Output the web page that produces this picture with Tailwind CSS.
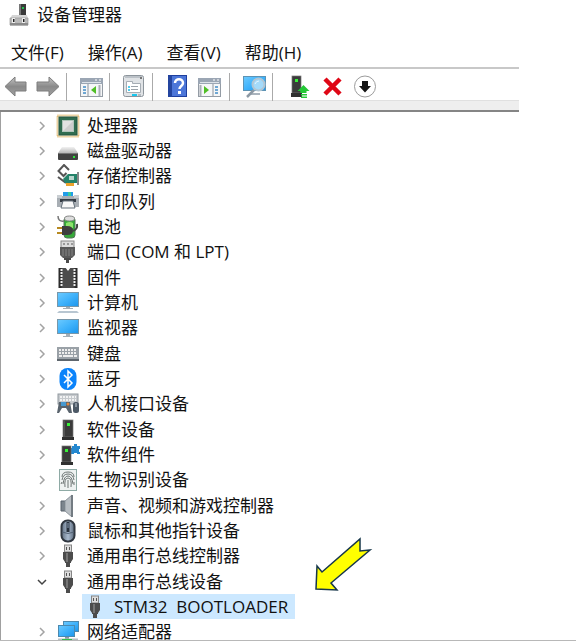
<!DOCTYPE html>
<html lang="zh-CN">
<head>
    <meta charset="UTF-8">
    <meta name="viewport" content="width=device-width, initial-scale=1.0">
    <title>设备管理器</title>
    <script src="https://cdn.jsdelivr.net/npm/@tailwindcss/browser@4"></script>
</head>
<body class="bg-white text-[#111] font-['Open_Sans','Noto_Sans_CJK_SC',sans-serif] text-[17px]">
    <!-- Shared icon shapes -->
    <svg class="absolute size-0">
        <defs>
            <linearGradient id="screen" x1="0" y1="0" x2="1" y2="1">
                <stop offset="0" stop-color="#6ccaff"/><stop offset=".5" stop-color="#3fb2fb"/><stop offset="1" stop-color="#1b95ec"/>
            </linearGradient>
            <linearGradient id="metal" x1="0" y1="0" x2="0" y2="1">
                <stop offset="0" stop-color="#c4c4c4"/><stop offset=".5" stop-color="#8a8a8a"/><stop offset="1" stop-color="#a0a0a0"/>
            </linearGradient>
            <linearGradient id="drive" x1="0" y1="0" x2="0" y2="1">
                <stop offset="0" stop-color="#f2f2f2"/><stop offset="1" stop-color="#b8b8b8"/>
            </linearGradient>
            <linearGradient id="mouseBody" x1="0" y1="0" x2="1" y2="0">
                <stop offset="0" stop-color="#5f6e80"/><stop offset=".5" stop-color="#a9bace"/><stop offset="1" stop-color="#5b6a7c"/>
            </linearGradient>
            <symbol id="chevron" viewBox="0 0 10 10"><path d="M3 1l4 4-4 4" fill="none" stroke="#a3a3a3" stroke-width="1.5"/></symbol>
            <symbol id="usb" viewBox="0 0 24 24">
                <rect x="8.500" y="1" width="7" height="7" fill="#ddd" stroke="#858585"/>
                <path d="M10 3h1v3h-1zM13 3h1v3h-1z" fill="#555"/>
                <path d="M7 8h10v7l-2 3v1h-1v4h-4v-4H9v-1l-2-3z" fill="#4c4c4c"/>
                <path d="M10 9h2v9h-2z" fill="#757575"/>
            </symbol>
            <symbol id="tower" viewBox="0 0 24 24">
                <rect x="7" y="2" width="10" height="17" fill="#3b3b3b" stroke="#777" stroke-width=".7"/>
                <path d="M6 19h12v3H6z" fill="#303030"/><path d="M7 3h2v16H7z" fill="#555"/>
                <rect x="11" y="5" width="3" height="3" fill="#38f038"/>
            </symbol>
        </defs>
    </svg>

    <div class="relative h-screen overflow-hidden border-b border-[#b8b8b8]">
        <!-- Title bar -->
        <header class="flex h-[30px] items-center gap-[5px] pl-2">
            <svg class="size-6" viewBox="0 0 24 24">
                <rect x="11" y="1" width="7" height="12" fill="#3a3a3a"/><path d="M11 1h2v12h-2z" fill="#777"/>
                <rect x="14" y="4" width="2" height="2" fill="#22c04c"/>
                <path d="M4 12h15l1 4H2z" fill="#d6d6d6"/><path d="M2 15h18v7H2z" fill="#b9b9b9" stroke="#999" stroke-width=".7"/>
                <path d="M2 20h18v2.500H2z" fill="#8c8c8c"/><path d="M4 15h3v5H4zM14 15h3v5h-3z" fill="#eee"/><path d="M5 16h1.500v3H5zM15 16h1.500v3H15z" fill="#222"/>
            </svg>
            <h1>设备管理器</h1>
        </header>

        <!-- Menu bar -->
        <nav class="mr-[57px] flex h-[39px] items-center gap-6 border-b-2 border-[#c8c8c8] pt-2 pl-[11px]">
            <button>文件(F)</button>
            <button>操作(A)</button>
            <button>查看(V)</button>
            <button>帮助(H)</button>
        </nav>

        <!-- Toolbar -->
        <div class="mr-[57px] flex h-[31px] items-center pt-1 pl-1">
            <button aria-label="后退"><svg class="size-6" viewBox="0 0 24 24"><path d="M1 11.500L11 2v5h11v9H11v5z" fill="url(#metal)" stroke="#7d7d7d"/></svg></button>
            <button class="ml-2" aria-label="前进"><svg class="size-6" viewBox="0 0 24 24"><path d="M23 11.500L13 2v5H1v9h12v5z" fill="url(#metal)" stroke="#7d7d7d"/></svg></button>
            <span class="ml-1.5 h-7 w-px bg-[#aaa]"></span>
            <button class="ml-3" aria-label="显示控制台树">
                <svg class="size-6" viewBox="0 0 24 24">
                    <rect x="1.500" y="3.500" width="22" height="18" fill="#f5f6f7" stroke="#949ca5"/><path d="M1 3h23v6H1z" fill="#9ba6b4"/>
                    <path d="M16 5h2M20 5h2" stroke="#fff"/><path d="M3 7.500h19" stroke="#dce2e8"/><path d="M9 9v12" stroke="#8b949e"/>
                    <path d="M4 12h3M4 15h3M4 18h3" stroke="#438dc7" stroke-width="1.500"/><path d="M17 11v8l-5-4z" fill="#4fbe26"/><path d="M20.500 10v11" stroke="#a9afb6" stroke-width="2"/>
                </svg>
            </button>
            <span class="ml-1.5 h-7 w-px bg-[#aaa]"></span>
            <button class="ml-3" aria-label="属性">
                <svg class="size-6" viewBox="0 0 24 24">
                    <rect x="1.500" y=".5" width="20" height="21" rx="2" fill="#e0e3e6" stroke="#8d959c"/><path d="M3 2h17" stroke="#bcc2c8" stroke-width="2"/>
                    <path d="M18 2l2 2M20 2l-2 2" stroke="#777"/><path d="M4.500 6.500h6v2h8v9h-14z" fill="#fff" stroke="#a6adb4"/>
                    <path d="M6 12h2M6 15h2" stroke="#15bde9" stroke-width="1.500"/><path d="M9 11.500h7M9 14.500h7" stroke="#9ca3aa"/>
                    <path d="M10 19h5v2h-5z" fill="#19c6ee"/><path d="M16 19h3v2h-3z" fill="#b4bac0"/>
                </svg>
            </button>
            <span class="ml-1.5 h-7 w-px bg-[#aaa]"></span>
            <button class="ml-3" aria-label="帮助">
                <svg class="size-6" viewBox="0 0 24 24">
                    <rect x="3.500" y=".5" width="18" height="21" fill="#4c76d8" stroke="#1e3f9e"/><path d="M3 1h4v21H3z" fill="#24459f"/>
                    <path d="M10 8c0-5 8-5 8 0 0 3-3.500 3-3.500 6" fill="none" stroke="#fff" stroke-width="2.500"/><path d="M13 16h3v3h-3z" fill="#fff"/>
                </svg>
            </button>
            <button class="ml-2" aria-label="操作窗格">
                <svg class="size-6" viewBox="0 0 24 24">
                    <rect x="1.500" y="3.500" width="22" height="18" fill="#f5f6f7" stroke="#949ca5"/><path d="M1 3h23v6H1z" fill="#9ba6b4"/>
                    <path d="M16 5h2M20 5h2" stroke="#fff"/><path d="M3 7.500h19" stroke="#dce2e8"/><path d="M16 9v12" stroke="#8b949e"/>
                    <path d="M18 12h3M18 15h3M18 18h3" stroke="#438dc7" stroke-width="1.500"/><path d="M7 11v8l5-4z" fill="#4fbe26"/><path d="M3.500 10v11" stroke="#a9afb6" stroke-width="2"/>
                </svg>
            </button>
            <span class="ml-2 h-7 w-px bg-[#aaa]"></span>
            <button class="ml-3" aria-label="扫描检测硬件改动">
                <svg class="size-6" viewBox="0 0 24 24">
                    <rect x="1.500" y="1.500" width="22" height="14" fill="url(#screen)" stroke="#5d93b4"/><path d="M8 18h10v2H8z" fill="#aab4bd"/>
                    <path d="M12 15l-7 7" stroke="#8d99a4" stroke-width="2.500"/><circle cx="16.500" cy="9.500" r="6" fill="#a4dafa" stroke="#b1c6d4" stroke-width="2"/>
                    <path d="M13 9q1-3 4-3" fill="none" stroke="#e6f6ff"/>
                </svg>
            </button>
            <span class="ml-1.5 h-7 w-px bg-[#aaa]"></span>
            <button class="ml-4" aria-label="更新驱动程序">
                <svg class="size-6" viewBox="0 0 24 24">
                    <rect x="3" y="1" width="9" height="17" fill="#3b3b3b" stroke="#777" stroke-width=".7"/><path d="M2 18h11v4H2z" fill="#303030"/>
                    <rect x="6" y="4" width="3" height="3" fill="#38f038"/><path d="M14.500 10l6 6h-3v2h-6v-2h-3z" fill="#24c736"/><path d="M12 19h6v1.500h-6zM12 21.500h6V23h-6z" fill="#24c736"/>
                </svg>
            </button>
            <button class="ml-2" aria-label="卸载设备"><svg class="size-6" viewBox="0 0 24 24"><path d="M4 4l15 15M19 4L4 19" stroke="#df0716" stroke-width="4.500"/></svg></button>
            <button class="ml-2" aria-label="禁用设备">
                <svg class="size-6" viewBox="0 0 24 24"><circle cx="12" cy="11.500" r="10.500" fill="#fff" stroke="#9c9c9c"/><path d="M9 6h6v5h3l-6 6.500L6 11h3z" fill="#151515"/></svg>
            </button>
        </div>
        <div class="mr-[57px] h-3 border-t border-b-2 border-t-[#e0e0e0] border-b-[#858585] bg-[#eee]"></div>

        <!-- Device tree -->
        <ul class="border-l border-[#a0a0a0] pt-px pl-9 *:flex *:h-[25px] *:items-center *:gap-[7px] *:whitespace-nowrap *:nth-[3n]:mb-px">
            <li>
                <svg class="mr-0.5 size-2.5"><use href="#chevron"/></svg>
                <svg class="size-6" viewBox="0 0 24 24">
                    <rect x="1.500" y="1.500" width="21" height="21" fill="none" stroke="#d9a648" stroke-width="2" stroke-dasharray="1 1"/>
                    <rect x="3" y="3" width="18" height="18" fill="#306c50" stroke="#24563e"/><rect x="6.500" y="6.500" width="11" height="11" fill="#e2e2e2" stroke="#b1c5ba"/><path d="M7 17L17 7v10z" fill="#cdcdcd"/>
                </svg>
                处理器
            </li>
            <li>
                <svg class="mr-0.5 size-2.5"><use href="#chevron"/></svg>
                <svg class="size-6" viewBox="0 0 24 24"><path d="M6 8h12l4 6H2z" fill="url(#drive)"/><rect x="2" y="14" width="20" height="7" rx="1" fill="#424242"/><path d="M3 14h18v1H3z" fill="#777"/><path d="M17 17h2v2h-2z" fill="#2ee43a"/></svg>
                磁盘驱动器
            </li>
            <li>
                <svg class="mr-0.5 size-2.5"><use href="#chevron"/></svg>
                <svg class="size-6" viewBox="0 0 24 24">
                    <path d="M13 6L8 1 2.500 7l5 5 3-3M2 13l8 6" fill="none" stroke="#555" stroke-width="2"/><path d="M7 15l5-5h10v9H9z" fill="#25836a"/>
                    <path d="M22 8v13" stroke="#888" stroke-width="2"/><path d="M13 12h5v4h-5z" fill="#b9d5cd"/><path d="M10 19h8v3h-8z" fill="#eba22c"/>
                </svg>
                存储控制器
            </li>
            <li>
                <svg class="mr-0.5 size-2.5"><use href="#chevron"/></svg>
                <svg class="size-6" viewBox="0 0 24 24">
                    <path d="M7 2h10v5H7z" fill="#219ce9"/><path d="M12 2h3v4h-3z" fill="#35c89b"/><path d="M1 6h22v11H1z" fill="#a8aeb4"/><path d="M1 5h5v3H1zM18 5h5v3h-5z" fill="#c9ced2"/><path d="M4 9h16v3H4z" fill="#343b43"/>
                    <path d="M7 11h10l2 7H5z" fill="#f8f8f8" stroke="#65707a"/>
                </svg>
                打印队列
            </li>
            <li>
                <svg class="mr-0.5 size-2.5"><use href="#chevron"/></svg>
                <svg class="size-6" viewBox="0 0 24 24">
                    <rect x="8" y="2" width="11" height="21" rx="3" fill="#35a938" stroke="#56725a"/><ellipse cx="13.500" cy="3.500" rx="5" ry="2.500" fill="#ddd" stroke="#888"/>
                    <path d="M10 8q4-2 7 0v5h-7z" fill="#8ce36b"/><path d="M2 1q0 6 6 5" fill="none" stroke="#777" stroke-width="1.500"/>
                    <path d="M6 11h5q6 0 6 4.500T11 20H6z" fill="#3e3e3e"/><path d="M1 13h5M1 18h5" stroke="#b78a21" stroke-width="2"/><path d="M16 16q6-1 5-7" fill="none" stroke="#444" stroke-width="2"/>
                </svg>
                电池
            </li>
            <li>
                <svg class="mr-0.5 size-2.5"><use href="#chevron"/></svg>
                <svg class="size-6" viewBox="0 0 24 24">
                    <rect x="5" y="1" width="13" height="7" fill="#ddd" stroke="#888"/><path d="M7 3h2v2H7zM11 3h2v2h-2zM15 3h2v2h-2z" fill="#999"/>
                    <path d="M4 7h15v8l-3 3H7l-3-3z" fill="#5a5a5a"/><path d="M7 9v7M10 9v7M13 9v7M16 9v7" stroke="#858585"/><path d="M8 18h7v2h-2v3h-3v-3H8z" fill="#4a4a4a"/>
                </svg>
                端口 (COM 和 LPT)
            </li>
            <li>
                <svg class="mr-0.5 size-2.5"><use href="#chevron"/></svg>
                <svg class="size-6" viewBox="0 0 24 24"><path d="M4 2h16v20H4z" fill="#4b4b4b"/><path d="M9 1h6l-3 4z" fill="#fff"/><path d="M4 2v20M20 2v20" stroke="#2c2c2c" stroke-width="3"/><path d="M5.500 3v18M18.500 3v18" stroke="#eee" stroke-width="2" stroke-dasharray="2 1"/></svg>
                固件
            </li>
            <li>
                <svg class="mr-0.5 size-2.5"><use href="#chevron"/></svg>
                <svg class="size-6" viewBox="0 0 24 24"><rect x="1.500" y="1.500" width="21" height="14" fill="url(#screen)" stroke="#7797aa"/><path d="M10 16h4v1h3v1H7v-1h3z" fill="#a4afb7"/><path d="M3 20h18l2 2H1z" fill="#b8c6d1"/></svg>
                计算机
            </li>
            <li>
                <svg class="mr-0.5 size-2.5"><use href="#chevron"/></svg>
                <svg class="size-6" viewBox="0 0 24 24"><rect x="1.500" y="3.500" width="21" height="14" fill="url(#screen)" stroke="#7797aa"/><path d="M10 18h4v2h3v1H7v-1h3z" fill="#a4afb7"/></svg>
                监视器
            </li>
            <li>
                <svg class="mr-0.5 size-2.5"><use href="#chevron"/></svg>
                <svg class="size-6" viewBox="0 0 24 24"><rect x="1" y="5" width="22" height="13" fill="#9aa1a7"/><path d="M3 8h18M3 11h18" stroke="#eee" stroke-width="2" stroke-dasharray="2 1"/><path d="M3 14h3M7 14h10M18 14h3" stroke="#eee" stroke-width="2"/><path d="M1 17h22v2H1z" fill="#5e666d"/></svg>
                键盘
            </li>
            <li>
                <svg class="mr-0.5 size-2.5"><use href="#chevron"/></svg>
                <svg class="size-6" viewBox="0 0 24 24"><rect x="3.500" y="1" width="17" height="22" rx="8" fill="#0b83fa"/><path d="M8 8l8 8-4 4V4l4 4-8 8" fill="none" stroke="#fff" stroke-width="1.500"/></svg>
                蓝牙
            </li>
            <li>
                <svg class="mr-0.5 size-2.5"><use href="#chevron"/></svg>
                <svg class="size-6" viewBox="0 0 24 24">
                    <rect x="2" y="2" width="20" height="10" fill="#c5c9cd" stroke="#9299a0"/><path d="M4 5h16M4 8h16" stroke="#fff" stroke-width="1.500" stroke-dasharray="2 1"/>
                    <path d="M3 10h11l2 11h-3l-3-5H6l-3 5H1z" fill="#59636d"/><path d="M5 10h5v4H5z" fill="#4799d0"/><circle cx="12" cy="12" r="1.500" fill="#e0873f"/>
                    <rect x="17" y="10" width="6" height="11" rx="2.500" fill="#4d5966"/><path d="M20 11v4" stroke="#c5ced7"/>
                </svg>
                人机接口设备
            </li>
            <li>
                <svg class="mr-0.5 size-2.5"><use href="#chevron"/></svg>
                <svg class="size-6"><use href="#tower"/></svg>
                软件设备
            </li>
            <li>
                <svg class="mr-0.5 size-2.5"><use href="#chevron"/></svg>
                <svg class="size-6" viewBox="0 0 24 24">
                    <path d="M16 3h2V1h3v2h3v3h-1v3h1v2h-3v-1h-3v1h-3V8h-1V5h2z" fill="#2588cf"/>
                    <rect x="6" y="3" width="9" height="16" fill="#3b3b3b" stroke="#777" stroke-width=".7"/><path d="M5 19h12v3H5z" fill="#303030"/><rect x="9" y="6" width="3" height="3" fill="#38f038"/>
                </svg>
                软件组件
            </li>
            <li>
                <svg class="mr-0.5 size-2.5"><use href="#chevron"/></svg>
                <svg class="size-6" viewBox="0 0 24 24">
                    <rect x="3.500" y="1.500" width="17" height="21" fill="#eef2f1" stroke="#8eaaa5"/>
                    <path d="M6 9q0-5 6-5t6 5M6 12q1-6 6-6t6 6M7 16q1-8 5-8t5 8M9 19q-1-9 3-9t3 9M12 12v8M6 14l-1 2M18 14v3" fill="none" stroke="#6d7473"/>
                </svg>
                生物识别设备
            </li>
            <li>
                <svg class="mr-0.5 size-2.5"><use href="#chevron"/></svg>
                <svg class="size-6" viewBox="0 0 24 24"><path d="M5 7h4v10H5z" fill="#7c858d" stroke="#59636d"/><path d="M9 7l7-6v22l-7-6z" fill="#b8bec3" stroke="#8e969d"/><path d="M15 1h2v22h-2z" fill="#737b82"/></svg>
                声音、视频和游戏控制器
            </li>
            <li>
                <svg class="mr-0.5 size-2.5"><use href="#chevron"/></svg>
                <svg class="size-6" viewBox="0 0 24 24"><rect x="5.500" y="1.500" width="13" height="21" rx="6" fill="url(#mouseBody)" stroke="#303740" stroke-width="2"/><path d="M12 3v10" stroke="#28313d" stroke-width="3"/><path d="M12 4v5" stroke="#8ca1b8"/><path d="M6 13q6 3 12 0" fill="none" stroke="#536274"/></svg>
                鼠标和其他指针设备
            </li>
            <li>
                <svg class="mr-0.5 size-2.5"><use href="#chevron"/></svg>
                <svg class="size-6"><use href="#usb"/></svg>
                通用串行总线控制器
            </li>
            <li>
                <svg class="mr-0.5 size-2.5" viewBox="0 0 10 10"><path d="M1 3l4 4 4-4" fill="none" stroke="#444" stroke-width="1.500"/></svg>
                <svg class="size-6"><use href="#usb"/></svg>
                通用串行总线设备
            </li>
            <li class="pl-[45px]">
                <div class="flex h-full items-center gap-[7px] bg-[#cce8ff] pr-[7px] pl-px">
                    <svg class="size-6"><use href="#usb"/></svg>
                    <span class="whitespace-pre">STM32  BOOTLOADER</span>
                </div>
            </li>
            <li class="leading-4">
                <svg class="mr-0.5 size-2.5"><use href="#chevron"/></svg>
                <svg class="size-6" viewBox="0 0 24 24">
                    <rect x="7.500" y="1.500" width="15" height="10" fill="url(#screen)" stroke="#4c89ae"/><rect x="2.500" y="5.500" width="16" height="11" fill="url(#screen)" stroke="#4c89ae"/>
                    <path d="M9 17h4v2H9z" fill="#8d989f"/><path d="M2 20h20" stroke="#b6bfc5" stroke-width="3"/><path d="M6 19h10v3H6z" fill="#30bd4c"/>
                </svg>
                网络适配器
            </li>
        </ul>

        <!-- Callout arrow -->
        <svg class="absolute top-[536px] left-[312px] h-[58px] w-[62px]" viewBox="0 0 62 58">
            <path d="M4 53L5 30l5 6L48 3v12l10-1-39 33 6 7z" fill="#ff0" stroke="#17374b" stroke-width="1.500"/>
        </svg>
    </div>
</body>
</html>
